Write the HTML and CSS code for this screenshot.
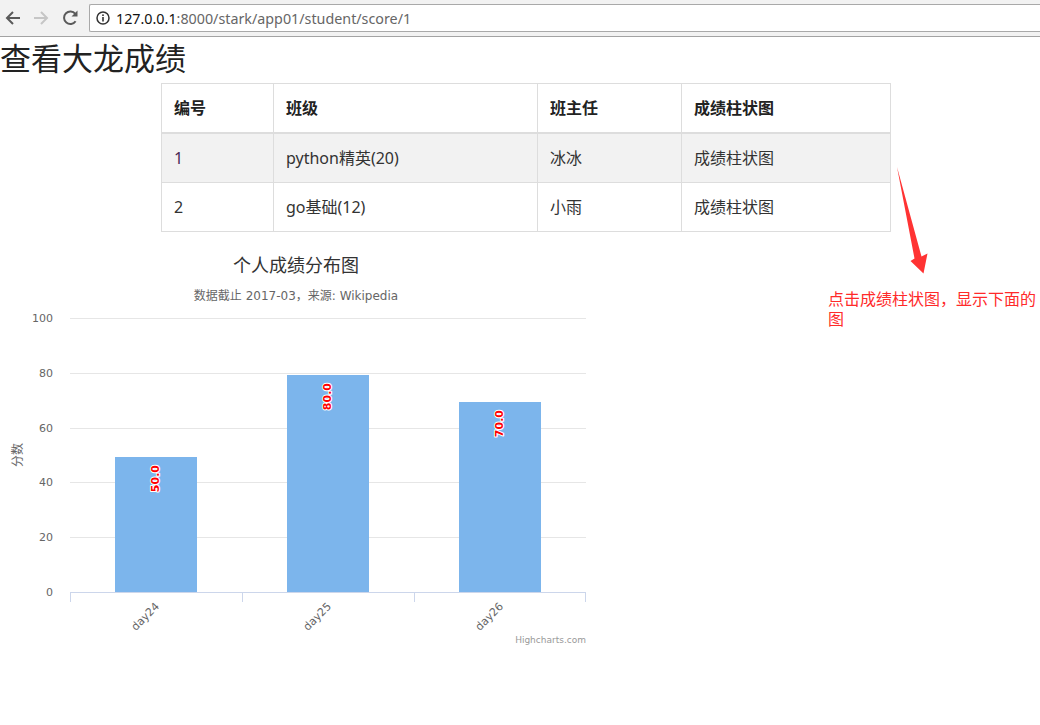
FILE: index.html
```html
<!DOCTYPE html>
<html>
<head>
<meta charset="utf-8">
<title>查看成绩</title>
<link rel="stylesheet" href="styles.css">
</head>
<body>
<div class="toolbar">
  <svg class="nav" width="89" height="36" viewBox="0 0 89 36">
    <path d="M20 18H7M13 12l-6 6 6 6" fill="none" stroke="#5a5a5a" stroke-width="2"/>
    <path d="M34 18h13M41 12l6 6-6 6" fill="none" stroke="#c6c6c6" stroke-width="2"/>
    <path d="M75.6 21.2A6.3 6.3 0 1 1 75.3 13.8" fill="none" stroke="#5a5a5a" stroke-width="2"/>
    <path d="M77.5 10.5v6h-6z" fill="#5a5a5a"/>
  </svg>
  <div class="omnibox">
    <svg class="info" width="14" height="14" viewBox="0 0 14 14">
      <circle cx="7" cy="7" r="6" fill="none" stroke="#333" stroke-width="1.5"/>
      <rect x="6.2" y="6" width="1.6" height="4.5" fill="#333"/>
      <rect x="6.2" y="3.4" width="1.6" height="1.6" fill="#333"/>
    </svg>
    <span class="host">127.0.0.1</span><span class="path">:8000/stark/app01/student/score/1</span>
  </div>
</div>
<div class="page">
  <h1 class="title">查看大龙成绩</h1>
  <table class="grid">
    <thead>
      <tr><th class="c-id">编号</th><th class="c-cls">班级</th><th class="c-tch">班主任</th><th class="c-chart">成绩柱状图</th></tr>
    </thead>
    <tbody>
      <tr><td class="num">1</td><td>python精英(20)</td><td>冰冰</td><td>成绩柱状图</td></tr>
      <tr><td>2</td><td>go基础(12)</td><td>小雨</td><td>成绩柱状图</td></tr>
    </tbody>
  </table>

  <svg class="chart" width="600" height="400" viewBox="0 0 600 400">
    <text class="ch-title" x="296" y="22" text-anchor="middle">个人成绩分布图</text>
    <text class="ch-sub" x="296" y="50" text-anchor="middle">数据截止 2017-03，来源: Wikipedia</text>
    <g class="gridlines">
      <path d="M70 68.5H586M70 123.5H586M70 178.5H586M70 232.5H586M70 287.5H586"/>
    </g>
    <g class="ylabels">
      <text x="53" y="72">100</text>
      <text x="53" y="127">80</text>
      <text x="53" y="182">60</text>
      <text x="53" y="236">40</text>
      <text x="53" y="291">20</text>
      <text x="53" y="346">0</text>
    </g>
    <text class="ytitle" x="22" y="205" text-anchor="middle" transform="rotate(-90 22 205)">分数</text>
    <g class="bars">
      <rect x="115" y="207" width="82" height="135"/>
      <rect x="287" y="125" width="82" height="217"/>
      <rect x="459" y="152" width="82" height="190"/>
    </g>
    <g class="axis">
      <path d="M70 342.5H586M70.5 342V352M242.5 342V352M414.5 342V352M585.5 342V352"/>
    </g>
    <g class="dlabels">
      <text x="159" y="215" text-anchor="end" transform="rotate(-90 159 215)">50.0</text>
      <text x="331" y="133" text-anchor="end" transform="rotate(-90 331 133)">80.0</text>
      <text x="503" y="160" text-anchor="end" transform="rotate(-90 503 160)">70.0</text>
    </g>
    <g class="xlabels">
      <text x="160" y="357" text-anchor="end" transform="rotate(-45 160 357)">day24</text>
      <text x="332" y="357" text-anchor="end" transform="rotate(-45 332 357)">day25</text>
      <text x="504" y="357" text-anchor="end" transform="rotate(-45 504 357)">day26</text>
    </g>
    <text class="credits" x="586" y="393" text-anchor="end">Highcharts.com</text>
  </svg>

  <svg class="arrow" width="40" height="120" viewBox="890 160 40 120">
    <polygon points="897,167 921.5,256.5 927.5,253.5 923.5,273.5 910.5,261 914.5,258.5" fill="#ff3333"/>
  </svg>
  <p class="note">点击成绩柱状图，显示下面的图</p>
</div>
</body>
</html>
```

FILE: styles.css
```css
html, body {
  margin: 0;
  padding: 0;
  background: #fff;
}

body {
  font-family: "Noto Sans", "Noto Sans CJK SC", sans-serif;
  color: #333;
}

.toolbar {
  display: flex;
  align-items: flex-start;
  height: 36px;
  background: #f2f2f2;
  border-bottom: 1px solid #a3a3a3;
}

.nav {
  display: block;
  flex: none;
}

.omnibox {
  flex: 1;
  margin-top: 4px;
  height: 26px;
  background: #fff;
  border: 1px solid #a9a9a9;
  border-right: none;
  border-radius: 2px 0 0 2px;
  display: flex;
  align-items: center;
  padding-left: 6px;
  font-family: "Noto Sans", sans-serif;
  font-size: 14.3px;
  white-space: nowrap;
}

.info {
  display: block;
  margin-right: 6px;
}

.host {
  color: #111;
}

.path {
  color: #666;
}

.page {
  position: relative;
}

.title {
  margin: 0 0 6px 0;
  font-family: "Noto Sans CJK SC", sans-serif;
  font-size: 31px;
  line-height: 40px;
  font-weight: normal;
  color: #222;
}

.grid {
  margin-left: 161px;
  width: 730px;
  border-collapse: collapse;
  table-layout: fixed;
  font-family: "Noto Sans", "Noto Sans CJK SC", sans-serif;
  font-size: 16px;
  color: #333;
}

.grid th,
.grid td {
  border: 1px solid #dddddd;
  padding: 13px 12px;
  line-height: 22px;
  text-align: left;
  vertical-align: top;
}

.grid th {
  font-weight: bold;
  border-bottom-width: 2px;
  color: #222;
}

.c-id { width: 87px; }
.c-cls { width: 239px; }
.c-tch { width: 119px; }
.c-chart { width: auto; }

.grid tbody tr:nth-child(odd) {
  background: #f2f2f2;
}

.num {
  color: #4b2a55;
}

.chart {
  display: block;
  margin-top: 18px;
  font-family: "DejaVu Sans", "Noto Sans CJK SC", sans-serif;
}

.ch-title {
  font-family: "Noto Sans CJK SC", sans-serif;
  font-size: 18px;
  fill: #333;
}

.ch-sub {
  font-size: 12px;
  fill: #666;
}

.gridlines path {
  stroke: #e6e6e6;
  stroke-width: 1;
  fill: none;
}

.ylabels text {
  font-size: 11px;
  fill: #666;
  text-anchor: end;
}

.ytitle {
  font-family: "Noto Sans CJK SC", sans-serif;
  font-size: 12px;
  fill: #666;
}

.bars rect {
  fill: #7cb5ec;
}

.axis path {
  stroke: #ccd6eb;
  stroke-width: 1;
  fill: none;
}

.dlabels text {
  font-size: 11px;
  font-weight: bold;
  fill: #ff0000;
  stroke: #ffffff;
  stroke-width: 2px;
  stroke-linejoin: round;
  paint-order: stroke;
}

.xlabels text {
  font-size: 11px;
  fill: #666;
}

.credits {
  font-size: 9px;
  fill: #999;
}

.arrow {
  position: absolute;
  left: 890px;
  top: 123px;
}

.note {
  position: absolute;
  left: 828px;
  top: 251px;
  width: 212px;
  margin: 0;
  font-family: "Noto Sans CJK SC", sans-serif;
  font-size: 16px;
  line-height: 20px;
  color: #ff2a2a;
}
```
